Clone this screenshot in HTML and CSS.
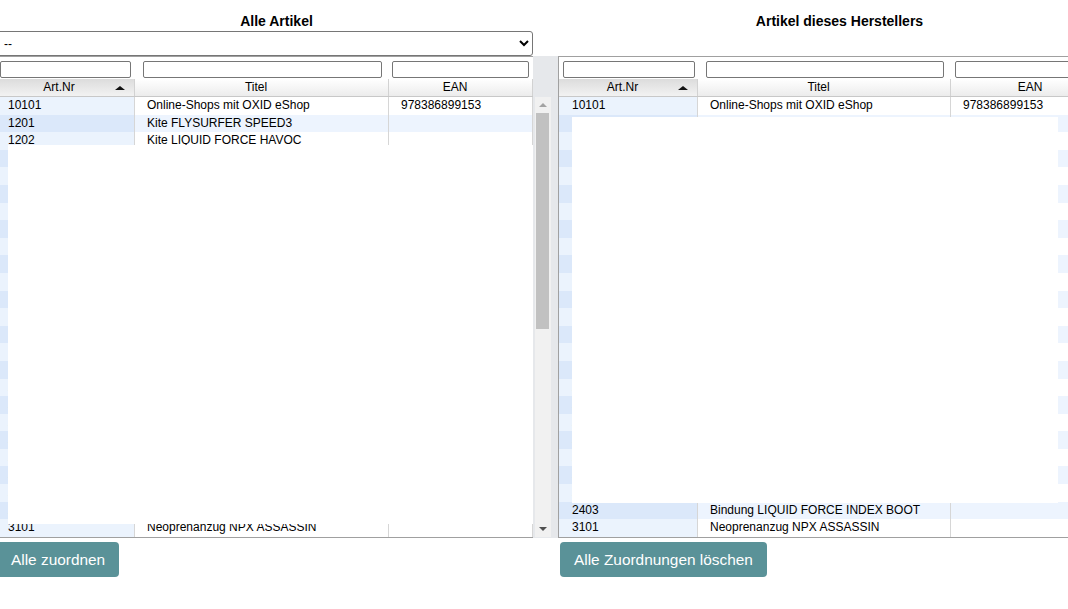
FILE: index.html
```html
<!DOCTYPE html>
<html lang="de">
<head>
    <meta charset="UTF-8">
    <title>Artikel zuordnen</title>
    <link rel="stylesheet" href="styles.css">
</head>
<body>
    <div class="page">
        <!-- linke Seite: alle Artikel -->
        <div class="panel panel-left">
            <h3 class="panel-title">Alle Artikel</h3>
            <select class="cat-select"><option>--</option></select>
            <div class="grid">
                <div class="grid-main">
                    <div class="cols filter-row">
                        <div class="fcell"><input type="text"></div>
                        <div class="fcell"><input type="text"></div>
                        <div class="fcell"><input type="text"></div>
                    </div>
                    <div class="cols head-row">
                        <div class="hcell sorted">Art.Nr<span class="sort-up"></span></div>
                        <div class="hcell">Titel</div>
                        <div class="hcell">EAN</div>
                    </div>
                    <div class="grid-body" id="leftBody">
                        <div class="mask mask-left"></div>
                    </div>
                </div>
                <div class="grid-side">
                    <div class="vscroll">
                        <div class="sb-btn"><span class="arr-up"></span></div>
                        <div class="sb-track"><div class="sb-thumb"></div></div>
                        <div class="sb-btn"><span class="arr-down"></span></div>
                    </div>
                </div>
            </div>
            <button class="btn">Alle zuordnen</button>
        </div>

        <!-- rechte Seite: Artikel des Herstellers -->
        <div class="panel panel-right">
            <h3 class="panel-title">Artikel dieses Herstellers</h3>
            <div class="select-gap"></div>
            <div class="grid">
                <div class="grid-main">
                    <div class="cols filter-row">
                        <div class="fcell"><input type="text"></div>
                        <div class="fcell"><input type="text"></div>
                        <div class="fcell"><input type="text"></div>
                    </div>
                    <div class="cols head-row">
                        <div class="hcell sorted">Art.Nr<span class="sort-up"></span></div>
                        <div class="hcell">Titel</div>
                        <div class="hcell">EAN</div>
                    </div>
                    <div class="grid-body" id="rightBody">
                        <div class="mask mask-right"></div>
                    </div>
                </div>
            </div>
            <button class="btn">Alle Zuordnungen löschen</button>
        </div>
    </div>

    <script>
        var articles = [
            ['10101', 'Online-Shops mit OXID eShop', '978386899153'],
            ['1201', 'Kite FLYSURFER SPEED3', ''],
            ['1202', 'Kite LIQUID FORCE HAVOC', ''],
            ['1205', 'Kite NBK EVO 2010', ''],
            ['1206', 'Kite CORE GTS', ''],
            ['1207', 'Kite NAISH PARK', ''],
            ['1208', 'Kite NBK REBEL 2010', ''],
            ['1209', 'Kite RRD PASSION', ''],
            ['1301', 'Kiteboard CABRINHA CALIBER', ''],
            ['1302', 'Kiteboard SLINGSHOT MISFIT', ''],
            ['1303', 'Kiteboard NAISH MONARCH', ''],
            ['1401', 'Trapez ION MADTRIXX', ''],
            ['1402', 'Trapez ION SOL KITE', ''],
            ['1403', 'Trapez ION SHIFT', ''],
            ['1501', 'Wakeboard LIQUID FORCE GROOVE', ''],
            ['1502', 'Wakeboard RONIX ONE', ''],
            ['2024', 'Kuyichi Jeans ANNA', ''],
            ['2101', 'Wakeboard LIQUID FORCE SHANE', ''],
            ['2102', 'Wakeboard LIQUID FORCE S4', ''],
            ['2103', 'Wakeboard LIQUID FORCE FLX', ''],
            ['2201', 'Wakeboard O\'BRIEN SYSTEM', ''],
            ['2401', 'Bindung O\'BRIEN DECADE CT', ''],
            ['2402', 'Bindung MAD HATTER', ''],
            ['2403', 'Bindung LIQUID FORCE INDEX BOOT', ''],
            ['3101', 'Neoprenanzug NPX ASSASSIN', '']
        ];

        function fillBody(id) {
            var body = document.getElementById(id);
            articles.forEach(function (a, i) {
                var row = document.createElement('div');
                row.className = 'cols row' + (i % 2 ? ' alt' : '');
                row.innerHTML = '<div class="cell sorted">' + a[0] + '</div>' +
                    '<div class="cell">' + a[1] + '</div>' +
                    '<div class="cell">' + a[2] + '</div>';
                body.insertBefore(row, body.lastElementChild);
            });
        }
        fillBody('leftBody');
        fillBody('rightBody');
    </script>
</body>
</html>
```

FILE: styles.css
```css
* {
    box-sizing: border-box;
}

html, body {
    margin: 0;
    padding: 0;
    overflow: hidden;
    background: #fff;
    font-family: "Liberation Sans", Arial, sans-serif;
    color: #000;
}

.page {
    display: flex;
    margin-left: -5px;
}

.panel {
    width: 563px;
    flex: none;
}

.panel-title {
    margin: 13px 0 2px;
    line-height: 16px;
    font-size: 14px;
    font-weight: bold;
    text-align: center;
}

.cat-select {
    display: block;
    width: 538px;
    height: 25px;
    margin: 0;
    padding: 0 2px 0 4px;
    font-family: "Liberation Sans", Arial, sans-serif;
    font-size: 12px;
    color: #000;
    background: #fff;
    border: 1px solid #767676;
    border-radius: 3px;
}

.select-gap {
    height: 25px;
}

.grid {
    display: flex;
    height: 482px;
}

.grid-main {
    width: 538px;
    border-top: 1px solid #a0a0a0;
    border-bottom: 1px solid #a0a0a0;
    display: flex;
    flex-direction: column;
}

.panel-right .grid-main {
    flex: 1;
    border-left: 1px solid #a0a0a0;
}

.cols {
    display: grid;
    grid-template-columns: 140px 254px 144px;
}

.panel-right .cols {
    grid-template-columns: 139px 253px 1fr;
}

.filter-row {
    height: 22px;
    background: #fff;
}

.fcell {
    padding: 4px 4px 0 5px;
}

.fcell:nth-child(2) {
    padding: 4px 7px 0 8px;
}

.fcell:nth-child(3) {
    padding: 4px 4px 0 3px;
}

.panel-right .fcell:nth-child(1) {
    padding: 4px 3px 0 4px;
}

.panel-right .fcell:nth-child(3) {
    padding: 4px 4px 0 4px;
}

.fcell input {
    display: block;
    width: 100%;
    height: 17px;
    margin: 0;
    border: 1px solid #767676;
    border-radius: 2px;
    background: #fff;
}

.head-row {
    height: 18px;
    border-bottom: 1px solid #c8c8c8;
}

.hcell {
    position: relative;
    font-size: 12px;
    line-height: 17px;
    text-align: center;
    padding-right: 11px;
    background: linear-gradient(#ffffff, #ececec);
    border-right: 1px solid #d2d2d2;
}

.hcell.sorted {
    background: linear-gradient(#dcdcdc, #f2f2f2);
}

.sort-up {
    position: absolute;
    right: 9px;
    top: 7px;
    width: 0;
    height: 0;
    border-left: 5px solid transparent;
    border-right: 5px solid transparent;
    border-bottom: 4px solid #111;
}

.grid-body {
    position: relative;
    flex: 1;
    overflow: hidden;
}

.row {
    height: 17.6px;
    background: #fff;
}

.row.alt {
    background: #edf4fe;
}

.cell {
    font-size: 12px;
    line-height: 17.6px;
    padding-left: 12px;
    white-space: nowrap;
    overflow: hidden;
    border-right: 1px solid #d6d6d6;
}

.cell.sorted {
    padding-left: 13px;
    background: #ebf3fd;
}

.row.alt .cell.sorted {
    background: #dbe8fa;
}

/* weisse Flaechen ueber der Tabelle */
.mask {
    position: absolute;
    background: #fff;
}

.mask-left {
    left: 13px;
    top: 48px;
    width: 525px;
    height: 379px;
}

.mask-right {
    left: 13px;
    top: 20px;
    width: 486px;
    height: 386px;
}

.grid-side {
    flex: 1;
    background: #e6e8eb;
    padding: 41px 7px 1px 2px;
}

.vscroll {
    height: 440px;
    background: #f1f1f1;
    display: flex;
    flex-direction: column;
}

.sb-btn {
    height: 16px;
    display: flex;
    align-items: center;
    justify-content: center;
}

.arr-up, .arr-down {
    width: 0;
    height: 0;
    border-left: 4px solid transparent;
    border-right: 4px solid transparent;
}

.arr-up {
    border-bottom: 4px solid #a3a3a3;
}

.arr-down {
    border-top: 4px solid #505050;
}

.sb-track {
    flex: 1;
    padding: 0 2px 0 1px;
}

.sb-thumb {
    height: 216px;
    background: #c1c1c1;
}

.btn {
    display: block;
    height: 35px;
    margin: 4px 0 0 2px;
    padding: 0 14px;
    font-family: "Liberation Sans", Arial, sans-serif;
    font-size: 15.4px;
    color: #fff;
    background: #5a9298;
    border: none;
    border-radius: 4px;
}
```
